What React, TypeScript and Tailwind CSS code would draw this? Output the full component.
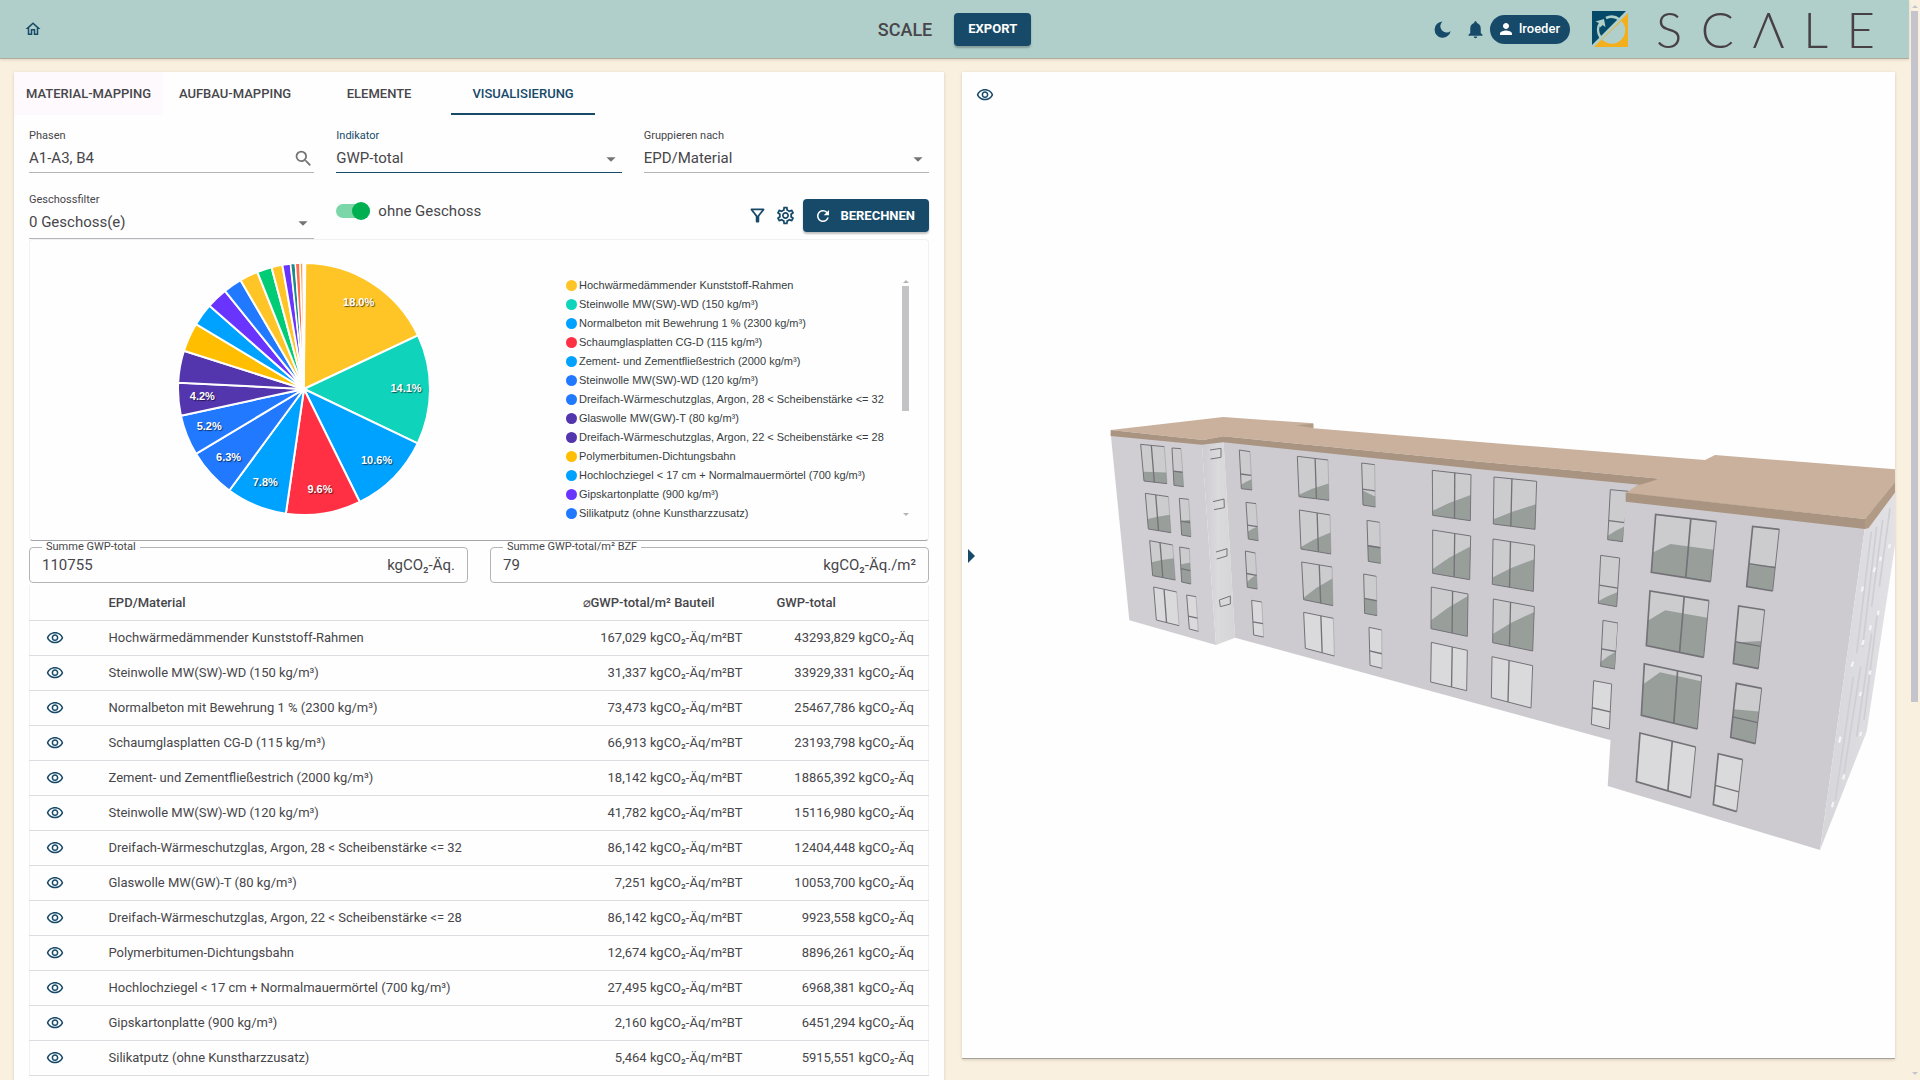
import React, { useState } from 'react';
import {
  MdArrowDropDown,
  MdNotifications,
  MdOutlineFilterAlt,
  MdOutlineHome,
  MdOutlineSettings,
  MdOutlineVisibility,
  MdPerson,
  MdRefresh,
  MdSearch,
} from 'react-icons/md';

interface Material {
  name: string;
  perArea: string;
  total: string;
  share: number;
  color: string;
}

const materials: Material[] = [
  { name: 'Hochwärmedämmender Kunststoff-Rahmen', perArea: '167,029', total: '43293,829', share: 18.0, color: '#ffc425' },
  { name: 'Steinwolle MW(SW)-WD (150 kg/m³)', perArea: '31,337', total: '33929,331', share: 14.1, color: '#0fd3bb' },
  { name: 'Normalbeton mit Bewehrung 1 % (2300 kg/m³)', perArea: '73,473', total: '25467,786', share: 10.6, color: '#00a2ff' },
  { name: 'Schaumglasplatten CG-D (115 kg/m³)', perArea: '66,913', total: '23193,798', share: 9.6, color: '#ff3043' },
  { name: 'Zement- und Zementfließestrich (2000 kg/m³)', perArea: '18,142', total: '18865,392', share: 7.8, color: '#00a2ff' },
  { name: 'Steinwolle MW(SW)-WD (120 kg/m³)', perArea: '41,782', total: '15116,980', share: 6.3, color: '#2179ff' },
  { name: 'Dreifach-Wärmeschutzglas, Argon, 28 < Scheibenstärke <= 32', perArea: '86,142', total: '12404,448', share: 5.2, color: '#2179ff' },
  { name: 'Glaswolle MW(GW)-T (80 kg/m³)', perArea: '7,251', total: '10053,700', share: 4.2, color: '#5335ad' },
  { name: 'Dreifach-Wärmeschutzglas, Argon, 22 < Scheibenstärke <= 28', perArea: '86,142', total: '9923,558', share: 4.1, color: '#5335ad' },
  { name: 'Polymerbitumen-Dichtungsbahn', perArea: '12,674', total: '8896,261', share: 3.7, color: '#ffbf00' },
  { name: 'Hochlochziegel < 17 cm + Normalmauermörtel (700 kg/m³)', perArea: '27,495', total: '6968,381', share: 2.9, color: '#00a2ff' },
  { name: 'Gipskartonplatte (900 kg/m³)', perArea: '2,160', total: '6451,294', share: 2.7, color: '#6a34ff' },
  { name: 'Silikatputz (ohne Kunstharzzusatz)', perArea: '5,464', total: '5915,551', share: 2.4, color: '#2179ff' },
];

// slices too small for the visible part of the legend
const restSlices = [
  { share: 2.35, color: '#ffc425' },
  { share: 1.9, color: '#00cc76' },
  { share: 1.4, color: '#ffc425' },
  { share: 1.05, color: '#6a34ff' },
  { share: 0.6, color: '#1a8a8a' },
  { share: 0.6, color: '#ff6a4d' },
  { share: 0.4, color: '#ff9f43' },
  { share: 0.3, color: '#ffffff' },
];

const tabs = ['MATERIAL-MAPPING', 'AUFBAU-MAPPING', 'ELEMENTE', 'VISUALISIERUNG'];

const RADIUS = 126;

const pointAt = (percent: number, radius: number) => {
  const angle = (percent / 100) * 2 * Math.PI;
  return [Math.sin(angle) * radius, -Math.cos(angle) * radius];
};

function PieChart() {
  let start = 0;
  const slices = [...materials, ...restSlices].map((s) => {
    const slice = { ...s, start, end: start + s.share };
    start += s.share;
    return slice;
  });

  return (
    <svg viewBox="-130 -130 260 260" className="h-[260px] w-[260px] shrink-0" role="img" aria-label="GWP-total">
      {slices.map((s, i) => {
        const [x1, y1] = pointAt(s.start, RADIUS);
        const [x2, y2] = pointAt(s.end, RADIUS);
        return (
          <path
            key={i}
            d={`M0 0L${x1} ${y1}A${RADIUS} ${RADIUS} 0 0 1 ${x2} ${y2}Z`}
            fill={s.color}
            stroke="#fff"
            strokeWidth={s.share < 1 ? 1.5 : 2}
          />
        );
      })}
      {slices.slice(0, 8).map((s, i) => {
        const [x, y] = pointAt((s.start + s.end) / 2, 102);
        return (
          <text
            key={i}
            x={x}
            y={y + 3}
            textAnchor="middle"
            fill="#fff"
            className="font-['Liberation_Sans',Arial,sans-serif] text-[11px] font-bold [text-shadow:1px_1px_1px_rgba(0,0,0,0.6)]"
          >
            {s.share.toFixed(1)}%
          </text>
        );
      })}
    </svg>
  );
}

interface Win {
  // corners: top left, top right, bottom right, bottom left
  q: number[];
  // mullion position
  split?: number;
  single?: boolean;
  // share of the height at which the floor starts, left and right
  floor?: [number, number];
  // floor runs level from the first third on
  level?: boolean;
}

const farWindows: Win[] = [
  { q: [152, 133, 223, 140, 231, 251, 162, 243], split: 0.45, floor: [0.75, 0.7] },
  { q: [166, 280, 235, 290, 243, 398, 175, 387], split: 0.45, floor: [0.72, 0.5] },
  { q: [179, 422, 248, 435, 256, 540, 188, 527], split: 0.45, floor: [0.62, 0.38] },
  { q: [191, 561, 260, 576, 267, 677, 199, 660], split: 0.45 },
  { q: [246, 144, 273, 146, 281, 260, 252, 256], single: true, floor: [0.62, 0.62] },
  { q: [268, 295, 296, 298, 303, 410, 275, 405], single: true, floor: [0.62, 0.55] },
  { q: [269, 441, 298, 446, 303, 552, 275, 546], single: true, floor: [0.5, 0.4] },
  { q: [290, 585, 318, 590, 325, 694, 298, 687], single: true },
  { q: [448, 150, 480, 155, 486, 270, 454, 266], single: true, floor: [0.9, 0.72] },
  { q: [468, 307, 498, 311, 505, 422, 475, 417], single: true, floor: [0.8, 0.62] },
  { q: [466, 453, 496, 459, 502, 567, 472, 562], single: true, floor: [0.85, 0.6] },
  { q: [485, 601, 515, 606, 521, 711, 491, 705], single: true },
  { q: [622, 169, 714, 180, 717, 301, 627, 290], floor: [0.95, 0.58] },
  { q: [628, 330, 720, 345, 723, 462, 633, 447], floor: [0.95, 0.45] },
  { q: [635, 486, 726, 501, 729, 617, 641, 599], floor: [0.95, 0.3] },
  { q: [641, 637, 730, 655, 733, 768, 646, 745] },
  { q: [815, 189, 854, 194, 856, 321, 819, 315], single: true, floor: [0.65, 0.75] },
  { q: [831, 361, 869, 367, 872, 490, 835, 484], single: true, floor: [0.6, 0.6] },
  { q: [821, 522, 859, 529, 861, 647, 824, 640], single: true, floor: [0.62, 0.62] },
  { q: [837, 682, 875, 690, 876, 805, 840, 796], single: true },
  { q: [1027, 211, 1143, 224, 1141, 362, 1028, 346], floor: [0.9, 0.44] },
  { q: [1028, 390, 1142, 408, 1139, 539, 1028, 520], floor: [0.9, 0.24] },
  { q: [1024, 561, 1134, 582, 1132, 709, 1023, 686], floor: [0.8, 0.05] },
  { q: [1024, 727, 1132, 751, 1130, 872, 1022, 846] },
  { q: [1212, 231, 1340, 244, 1335, 388, 1210, 372], split: 0.42, floor: [0.9, 0.48] },
  { q: [1209, 417, 1334, 436, 1330, 574, 1207, 553], split: 0.42, floor: [0.85, 0.3] },
  { q: [1210, 597, 1333, 620, 1328, 753, 1208, 728], split: 0.42, floor: [0.8, 0.12] },
  { q: [1206, 770, 1328, 797, 1323, 924, 1204, 893], split: 0.42 },
  { q: [1561, 269, 1615, 274, 1598, 425, 1553, 419], single: true, floor: [0.92, 0.7] },
  { q: [1532, 466, 1589, 474, 1580, 620, 1525, 610], single: true, floor: [0.95, 0.7] },
  { q: [1539, 661, 1584, 669, 1575, 807, 1532, 799], single: true, floor: [0.9, 0.62] },
  { q: [1511, 842, 1565, 852, 1558, 987, 1504, 973], single: true },
];

const nearWindows: Win[] = [
  { q: [1697, 343, 1879, 365, 1862, 545, 1684, 517], floor: [0.66, 0.47], level: true },
  { q: [1680, 573, 1857, 602, 1841, 772, 1669, 737], floor: [0.54, 0.3], level: true },
  { q: [1663, 791, 1835, 828, 1822, 987, 1654, 946], floor: [0.4, 0.1], level: true },
  { q: [1650, 999, 1817, 1041, 1802, 1193, 1639, 1145] },
  { q: [1988, 379, 2068, 388, 2048, 573, 1970, 560], single: true, floor: [0.64, 0.6] },
  { q: [1946, 618, 2024, 630, 2005, 806, 1930, 791], single: true, floor: [0.64, 0.53] },
  { q: [1939, 850, 2015, 865, 1996, 1031, 1922, 1012], single: true, floor: [0.48, 0.42] },
  { q: [1885, 1061, 1958, 1079, 1940, 1235, 1870, 1214], single: true },
];

const sideWindows = [
  'M360 150L393 145V172L362 177',
  'M369 305L402 297L403 323L372 329',
  'M378 456L411 446V468L380 477',
  'M388 600L421 588V612L391 620Z',
];

function BuildingWindow({ win }: { win: Win }) {
  const [ax, ay, bx, by, cx, cy, dx, dy] = win.q;
  const mix = (a: number, b: number, t: number) => a + (b - a) * t;
  const split = win.split ?? 0.58;
  const [fl, fr] = win.floor ?? [1, 1];
  const bendX = win.level ? 0.28 : 0.45;
  const bendY = win.level ? fr : mix(fl, fr, 0.5);
  const stroke = win.single || bx - ax < 150 ? 4 : 5;

  return (
    <g>
      <polygon points={win.q.join(' ')} fill={win.floor ? '#cccccf' : '#dad9dc'} />
      {win.floor && (
        <path
          d={`M${mix(ax, dx, fl)} ${mix(ay, dy, fl)}
            L${mix(mix(ax, dx, bendY), mix(bx, cx, bendY), bendX)} ${mix(mix(ay, dy, bendY), mix(by, cy, bendY), bendX)}
            L${mix(bx, cx, fr)} ${mix(by, cy, fr)}L${cx} ${cy}L${dx} ${dy}Z`}
          fill="#989f9b"
        />
      )}
      {win.single ? (
        <line
          x1={mix(ax, dx, 0.62)}
          y1={mix(ay, dy, 0.62)}
          x2={mix(bx, cx, 0.62)}
          y2={mix(by, cy, 0.62)}
          stroke="#737277"
          strokeWidth={stroke}
        />
      ) : (
        <line
          x1={mix(ax, bx, split)}
          y1={mix(ay, by, split)}
          x2={mix(dx, cx, split)}
          y2={mix(dy, cy, split)}
          stroke="#737277"
          strokeWidth={stroke}
        />
      )}
      <polyline
        points={`${bx} ${by} ${ax} ${ay} ${dx} ${dy} ${cx} ${cy}`}
        fill="none"
        stroke="#737277"
        strokeWidth={bx > 1620 ? 5 : 3}
      />
      <line x1={bx} y1={by} x2={cx} y2={cy} stroke="#77767b" strokeWidth={bx > 1000 ? 3 : 1} />
    </g>
  );
}

function BuildingModel() {
  return (
    <svg
      viewBox="-384 -984 2799 2958"
      preserveAspectRatio="xMaxYMid meet"
      className="block h-full w-full"
      role="img"
      aria-label="Gebäudemodell"
    >
      <defs>
        <linearGradient id="return" x1="0" x2="1">
          <stop offset="0" stopColor="#cdcbcf" />
          <stop offset="0.5" stopColor="#dad9dc" />
          <stop offset="1" stopColor="#d5d4d7" />
        </linearGradient>
        <linearGradient id="gable" x1="0" x2="1">
          <stop offset="0" stopColor="#d6d5d9" />
          <stop offset="1" stopColor="#e2e1e5" />
        </linearGradient>
      </defs>

      {/* walls */}
      <path d="M62 100L335 125L378 735L118 661Z" fill="#d0ced2" />
      <path d="M335 125L400 115L435 713L378 735Z" fill="url(#return)" />
      <path d="M400 115L1650 240H1660V1040L1560 1020L435 713Z" fill="#cdcbcf" />
      {farWindows.map((win, i) => (
        <BuildingWindow key={i} win={win} />
      ))}
      {sideWindows.map((d) => (
        <path key={d} d={d} fill="none" stroke="#737277" strokeWidth="3" />
      ))}
      <path d="M1607 300L2325 380L2190 1350L1553 1158Z" fill="#cdcbcf" />
      <path d="M2325 380L2416 265V430L2330 995L2190 1350Z" fill="url(#gable)" />
      {nearWindows.map((win, i) => (
        <BuildingWindow key={i} win={win} />
      ))}

      {/* gable recesses */}
      <g stroke="#cfced3" strokeWidth="5" fill="none">
        <path d="M2344 395L2300 760M2360 380L2318 740M2378 360L2345 620M2400 325L2368 560M2290 830L2236 1200M2312 800L2262 1120M2345 700L2300 1010M2362 640L2322 960" />
      </g>
      <g stroke="#f4f4f6" strokeWidth="7">
        <path d="M2319 560L2315 574M2355 502L2351 516M2373 470L2370 482M2400 432L2397 444M2366 632L2363 646M2343 676L2339 690M2321 720L2317 735M2290 785L2284 800M2342 812L2338 824M2313 876L2309 888M2252 1010L2247 1028M2314 996L2310 1008M2263 1124L2259 1138M2230 1206L2226 1222" />
      </g>

      {/* roof */}
      <path
        d="M62 90L400 51L670 70V85L1170 126L1845 180L1875 165L2416 208V250L2325 357L1607 280L1650 250L1710 236L1170 185L400 109L340 120Z"
        fill="#c9b19d"
      />
      <path d="M618 76L670 71V84Z" fill="#b09c89" />
      <path d="M62 90L340 120L400 109L1170 185L1710 236L1650 254L1170 208L400 127L335 134L62 108Z" fill="#a99481" />
      <path d="M1607 278L2325 357V387L1607 305Z" fill="#a99481" />
      <path d="M2325 357L2416 246V276L2336 384L2325 387Z" fill="#b19b87" />
    </svg>
  );
}

function Logo() {
  return (
    <div className="mr-[10px] flex items-center gap-7">
      <svg viewBox="0 0 36 36" className="h-9 w-9" aria-hidden="true">
        <path d="M0 0H34L0 34Z" fill="#054a68" />
        <path d="M36 2V36H2Z" fill="#f3af1c" />
        {/* lower half of the ring is filled, upper half is an arrow */}
        <path d="M29.500 10A12.500 12.500 0 1 1 10 28.500Z" fill="#b1cfca" />
        <path d="M8.500 26.500A13 13 0 0 1 8.500 11.500M14 7A13 13 0 0 1 27.500 8.500" fill="none" stroke="#b1cfca" strokeWidth="2.500" />
        <path d="M3.500 10.500L12 8L13.500 16L10.500 14L8.500 16.500L7 12Z" fill="#b1cfca" />
      </svg>
      <div
        className="flex w-[219px] justify-between font-['Lato',sans-serif] text-[49px] leading-9 font-light text-[#474145]"
        role="img"
        aria-label="SCALE"
      >
        <span>S</span>
        <span>C</span>
        <span>Λ</span>
        <span>L</span>
        <span>E</span>
      </div>
    </div>
  );
}

function Header() {
  return (
    <header className="grid h-[59px] shrink-0 grid-cols-[1fr_auto_1fr] items-center border-b border-[#b5a999] bg-[#b1cfca] px-6 shadow-[0_1px_3px_rgba(0,0,0,0.12)]">
      <a href="#" aria-label="Startseite" className="w-fit text-[#174a69]">
        <MdOutlineHome size={18} />
      </a>
      <div className="flex items-center gap-[22px]">
        <h1 className="text-[18px] font-medium text-[#47464a]">SCALE</h1>
        <button className="h-[33px] rounded bg-[#174a69] px-[14px] text-[13px] font-bold text-white shadow-[0_2px_2px_rgba(0,0,0,0.25)]">
          EXPORT
        </button>
      </div>
      <div className="flex items-center justify-end">
        <button aria-label="Dunkles Design" className="mr-[14px] text-[#174a69]">
          <svg viewBox="0 0 17 17" className="h-[17px] w-[17px]" fill="currentColor" aria-hidden="true">
            <path d="M8.500 .5A8.100 8.100 0 1 0 16.700 10A5.300 5.300 0 1 1 8.500 .5Z" />
          </svg>
        </button>
        <button aria-label="Benachrichtigungen" className="mr-1 text-[#174a69]">
          <MdNotifications size={21} />
        </button>
        <button className="mr-[22px] flex h-[29px] items-center gap-1 rounded-full bg-[#174a69] pr-[10px] pl-[7px] text-[13px] font-medium text-white">
          <MdPerson size={18} />
          lroeder
        </button>
        <Logo />
      </div>
    </header>
  );
}

interface SelectFieldProps {
  id: string;
  label: string;
  value: string;
  active?: boolean;
}

function SelectField({ id, label, value, active }: SelectFieldProps) {
  return (
    <div className={active ? 'border-b border-[#174a69] text-[#174a69]' : 'border-b border-[#b4b3b6] text-[#47464a]'}>
      <label htmlFor={id} className="block text-[11px] leading-4">
        {label}
      </label>
      <div className="relative">
        <select id={id} className="block h-7 w-full appearance-none bg-transparent text-[15px] text-[#47464a] outline-none">
          <option>{value}</option>
        </select>
        <MdArrowDropDown size={22} className="pointer-events-none absolute top-1 right-0 text-[#747376]" />
      </div>
    </div>
  );
}

interface SumFieldProps {
  id: string;
  label: string;
  value: string;
  unit: string;
}

function SumField({ id, label, value, unit }: SumFieldProps) {
  return (
    <fieldset className="h-[42px] min-w-0 rounded border border-[#b4b3b6] px-3">
      <legend className="px-1 text-[11px] leading-3">
        <label htmlFor={id}>{label}</label>
      </legend>
      <div className="flex h-6 items-center justify-between text-[15px]">
        <input id={id} readOnly defaultValue={value} className="w-40 min-w-0 bg-transparent outline-none" />
        <span>{unit}</span>
      </div>
    </fieldset>
  );
}

function Legend() {
  return (
    <div className="flex justify-between pr-[19px]">
      <ul className="font-['Liberation_Sans',Arial,sans-serif] text-[11px] text-[#373d3f]">
        {materials.map((m) => (
          <li key={m.name} className="flex h-[19px] items-center gap-[2px] whitespace-nowrap">
            <span className="h-[11px] w-[11px] rounded-full" style={{ backgroundColor: m.color }} />
            {m.name}
          </li>
        ))}
      </ul>
      <div className="flex h-[240px] w-[7px] flex-col items-center pt-1">
        <svg viewBox="0 0 6 3" className="h-[3px] w-[6px] shrink-0" aria-hidden="true">
          <path d="M3 0L6 3H0Z" fill="#b5b4b7" />
        </svg>
        <div className="mt-[3px] h-[125px] w-full bg-[#c3c2c5]" />
        <svg viewBox="0 0 6 3" className="mt-auto h-[3px] w-[6px] shrink-0" aria-hidden="true">
          <path d="M3 3L6 0H0Z" fill="#b5b4b7" />
        </svg>
      </div>
    </div>
  );
}

function MaterialTable() {
  return (
    <table className="w-full border-x border-[#f1f0f3] text-[13px]">
      <thead>
        <tr className="h-[35px] border-b border-[#dddce0] text-left">
          <th className="w-[79px]" aria-label="Anzeigen" />
          <th className="font-medium">EPD/Material</th>
          <th className="w-[194px] font-medium">⌀GWP-total/m² Bauteil</th>
          <th className="w-[152px] font-medium">GWP-total</th>
        </tr>
      </thead>
      <tbody>
        {materials.map((m) => (
          <tr key={m.name} className="h-[35px] border-b border-[#dddce0]">
            <td className="pl-4">
              <button aria-label={`${m.name} anzeigen`} className="block text-[#174a69]">
                <MdOutlineVisibility size={18} />
              </button>
            </td>
            <td>{m.name}</td>
            <td className="pr-[34px] text-right whitespace-nowrap">{m.perArea} kgCO₂-Äq/m²BT</td>
            <td className="pr-[14px] text-right whitespace-nowrap">{m.total} kgCO₂-Äq</td>
          </tr>
        ))}
      </tbody>
    </table>
  );
}

export default function App() {
  const [activeTab, setActiveTab] = useState('VISUALISIERUNG');
  const [withoutStorey, setWithoutStorey] = useState(true);

  return (
    <div className="flex h-screen overflow-hidden bg-[#faf0df] font-['Roboto',sans-serif] text-[#47464a]">
      <div className="flex min-w-0 flex-1 flex-col">
        <Header />
        <main className="grid min-h-0 flex-1 grid-cols-[930fr_933fr] grid-rows-[minmax(0,1fr)] gap-[18px] px-[14px] pt-[13px]">
          <section className="bg-[#fefefe] shadow-[0_1px_3px_rgba(0,0,0,0.15)]">
            <nav className="flex">
              {tabs.map((tab) => (
                <button
                  key={tab}
                  onClick={() => setActiveTab(tab)}
                  className={`h-[43px] min-w-36 border-b-2 px-3 pt-[2px] text-[13px] font-medium first:bg-[#fdf9fd] ${
                    tab === activeTab ? 'border-[#174a69] text-[#174a69]' : 'border-transparent'
                  }`}
                >
                  {tab}
                </button>
              ))}
            </nav>

            <div className="px-[15px] pt-[13px]">
              <div className="grid grid-cols-3 gap-x-[22px] gap-y-[19px]">
                <div className="border-b border-[#b4b3b6]">
                  <label htmlFor="phasen" className="block text-[11px] leading-4">
                    Phasen
                  </label>
                  <div className="flex h-7 items-center">
                    <input
                      id="phasen"
                      defaultValue="A1-A3, B4"
                      className="min-w-0 flex-1 bg-transparent text-[15px] outline-none"
                    />
                    <MdSearch size={21} className="text-[#747376]" />
                  </div>
                </div>
                <SelectField id="indikator" label="Indikator" value="GWP-total" active />
                <SelectField id="gruppieren" label="Gruppieren nach" value="EPD/Material" />

                <SelectField id="geschoss" label="Geschossfilter" value="0 Geschoss(e)" />
                <label className="flex h-[38px] items-center gap-2 text-[15px]">
                  <input
                    type="checkbox"
                    role="switch"
                    checked={withoutStorey}
                    onChange={(e) => setWithoutStorey(e.target.checked)}
                    className="peer sr-only"
                  />
                  <span className="flex h-[14px] w-[34px] items-center rounded-full bg-[#a9a9ad] peer-checked:justify-end peer-checked:bg-[#7bd6a8]">
                    <span className="h-[18px] w-[18px] rounded-full bg-[#00b050]" />
                  </span>
                  ohne Geschoss
                </label>
                <div className="flex h-[47px] items-center justify-end gap-[7px] text-[#174a69]">
                  <button aria-label="Filter">
                    <MdOutlineFilterAlt size={21} />
                  </button>
                  <button aria-label="Einstellungen">
                    <MdOutlineSettings size={21} />
                  </button>
                  <button className="flex h-[33px] items-center gap-2 rounded bg-[#174a69] pr-[14px] pl-[11px] text-[13px] font-bold text-white shadow-[0_2px_2px_rgba(0,0,0,0.25)]">
                    <MdRefresh size={18} />
                    BERECHNEN
                  </button>
                </div>
              </div>

              <div className="grid h-[302px] grid-cols-[536px_1fr] rounded border border-t-[#f1f0f3] border-r-[#f1f0f3] border-b-[#a5a4a8] border-l-[#f1f0f3] bg-[#fefefe]">
                <div className="flex justify-center pt-[19px] pl-3">
                  <PieChart />
                </div>
                <div className="pt-9">
                  <Legend />
                </div>
              </div>

              <div className="mb-[2px] grid grid-cols-2 gap-[22px]">
                <SumField id="summe" label="Summe GWP-total" value="110755" unit="kgCO₂-Äq." />
                <SumField id="summe-bzf" label="Summe GWP-total/m² BZF" value="79" unit="kgCO₂-Äq./m²" />
              </div>

              <MaterialTable />
            </div>
          </section>

          <section className="relative mb-[21px] border-b border-[#a5a198] bg-[#fefefe] shadow-[0_1px_3px_rgba(0,0,0,0.15)]">
            <BuildingModel />
            <button aria-label="Sichtbarkeit" className="absolute top-[14px] left-[14px] text-[#174a69]">
              <MdOutlineVisibility size={18} />
            </button>
            <button aria-label="Seitenleiste öffnen" className="absolute top-[477px] left-[6px]">
              <svg viewBox="0 0 7 14" className="h-[14px] w-[7px]" fill="#174a69" aria-hidden="true">
                <path d="M0 0L7 7L0 14Z" />
              </svg>
            </button>
          </section>
        </main>
      </div>

      {/* page scroll bar */}
      <div className="flex w-[11px] flex-col items-center pt-[5px] pb-[5px]">
        <svg viewBox="0 0 6 3" className="h-[3px] w-[6px]" aria-hidden="true">
          <path d="M3 0L6 3H0Z" fill="#c5c3cb" />
        </svg>
        <div className="mt-[3px] h-[691px] w-[7px] bg-[#c5c3cb]" />
        <svg viewBox="0 0 6 3" className="mt-auto h-[3px] w-[6px]" aria-hidden="true">
          <path d="M3 3L6 0H0Z" fill="#c5c3cb" />
        </svg>
      </div>
    </div>
  );
}
